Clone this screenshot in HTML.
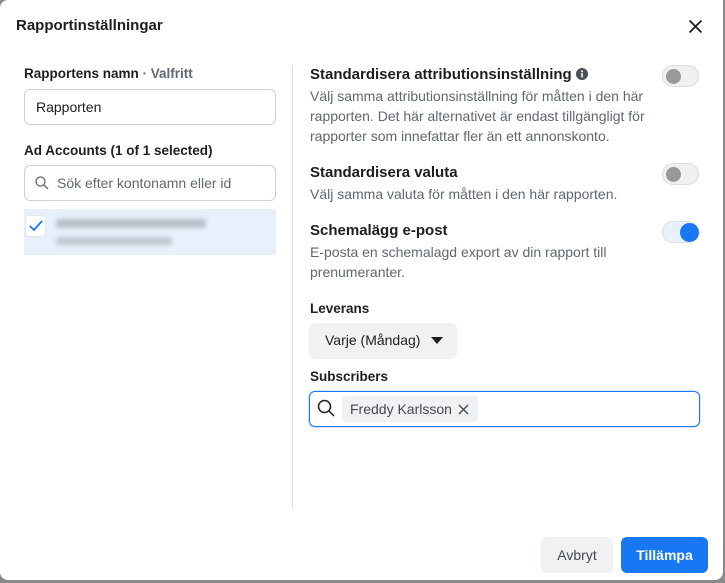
<!DOCTYPE html><html><head><meta charset="utf-8"><style>
body{margin:0;width:725px;height:583px;background:#8a8a8a;font-family:"Liberation Sans",sans-serif;color:#1c1e21;overflow:hidden;position:relative}
.d{position:absolute;left:0;top:0;width:723px;height:580px;background:#fff;border-radius:8px 0 8px 8px}
.a{position:absolute}
.lbl{font-size:13.5px;font-weight:bold;color:#1c1e21}
.in{border:1px solid #ccd0d5;border-radius:6px;background:#fff;box-sizing:border-box}
.t{font-size:14px;color:#606770;line-height:20px}
.h{font-size:15px;font-weight:bold;color:#1c1e21}
.tg{width:37px;height:22px;border-radius:11px;background:#f0f0f0;border:1px solid #dadde1;box-sizing:border-box}
.tg i{position:absolute;left:3px;top:3px;width:15px;height:15px;border-radius:50%;background:#999}
</style></head><body><div class="d">
<div class="a" style="left:16px;top:17px;font-size:15px;font-weight:bold;color:#1c1e21">Rapportinställningar</div>
<svg class="a" style="left:688px;top:19px" width="15" height="15"><path d="M1.5 1.5L13.5 13.5M13.5 1.5L1.5 13.5" stroke="#1c1e21" stroke-width="1.8"/></svg>
<div class="a lbl" style="left:24px;top:66px">Rapportens namn <span style="color:#606770">· Valfritt</span></div>
<div class="a in" style="left:24px;top:89px;width:252px;height:36px;font-size:14px;padding:9px 11px;color:#1c1e21">Rapporten</div>
<div class="a lbl" style="left:24px;top:143px">Ad Accounts (1 of 1 selected)</div>
<div class="a in" style="left:24px;top:165px;width:252px;height:36px;font-size:14px;padding:9px 0 0 32px;color:#606770">Sök efter kontonamn eller id</div>
<svg class="a" style="left:35px;top:176px" width="14" height="14"><circle cx="5.5" cy="5.5" r="4.5" fill="none" stroke="#606770" stroke-width="1.3"/><path d="M9 9L13 13" stroke="#606770" stroke-width="1.3"/></svg>
<div class="a" style="left:24px;top:209px;width:252px;height:46px;background:#e7f0fb"></div>
<div class="a" style="left:25px;top:215px;width:21px;height:22px;background:#fff;border-radius:4px;border:1px solid #e4e6eb;box-sizing:border-box"></div>
<svg class="a" style="left:28px;top:219px" width="16" height="14"><path d="M2 7L6 11L14 2" fill="none" stroke="#1877f2" stroke-width="1.8"/></svg>
<div class="a" style="left:56px;top:219px;width:150px;height:9px;background:#b9c0ca;filter:blur(2px);border-radius:3px"></div>
<div class="a" style="left:56px;top:237px;width:116px;height:8px;background:#c2c8d1;filter:blur(2px);border-radius:3px"></div>
<div class="a" style="left:292px;top:65px;width:1px;height:444px;background:#dadde1"></div>
<div class="a h" style="left:310px;top:66px">Standardisera attributionsinställning <svg width="12" height="12" style="vertical-align:-1px"><circle cx="6" cy="6" r="6" fill="#4b4f56"/><rect x="5.2" y="5" width="1.6" height="4.5" fill="#fff"/><circle cx="6" cy="3.2" r="1" fill="#fff"/></svg></div>
<div class="a t" style="left:310px;top:86px;width:380px">Välj samma attributionsinställning för måtten i den här rapporten. Det här alternativet är endast tillgängligt för rapporter som innefattar fler än ett annonskonto.</div>
<div class="a tg" style="left:662px;top:65px"><i></i></div>
<div class="a h" style="left:310px;top:164px">Standardisera valuta</div>
<div class="a t" style="left:310px;top:184px">Välj samma valuta för måtten i den här rapporten.</div>
<div class="a tg" style="left:662px;top:163px"><i></i></div>
<div class="a h" style="left:310px;top:222px">Schemalägg e-post</div>
<div class="a t" style="left:310px;top:242px;width:340px">E-posta en schemalagd export av din rapport till prenumeranter.</div>
<div class="a tg" style="left:662px;top:221px;background:#e7f0fb"><i style="left:17px;top:1px;width:19px;height:19px;background:#1877f2"></i></div>
<div class="a lbl" style="left:310px;top:301px">Leverans</div>
<div class="a" style="left:309px;top:323px;width:148px;height:36px;background:#f0f1f2;border-radius:6px"></div>
<div class="a" style="left:325px;top:332px;font-size:14px;color:#1c1e21">Varje (Måndag)</div>
<svg class="a" style="left:431px;top:337px" width="12" height="8"><path d="M0 0H12L6 7Z" fill="#1c1e21"/></svg>
<div class="a lbl" style="left:310px;top:369px">Subscribers</div>
<div class="a" style="left:309px;top:391px;width:391px;height:36px;border:1px solid #1877f2;border-radius:6px;box-sizing:border-box;box-shadow:0 0 0 1px #d8e6fb"></div>
<svg class="a" style="left:317px;top:399px" width="18" height="18"><circle cx="7.5" cy="7.5" r="6" fill="none" stroke="#1c1e21" stroke-width="1.5"/><path d="M12 12L17 17" stroke="#1c1e21" stroke-width="1.5"/></svg>
<div class="a" style="left:342px;top:396px;width:136px;height:26px;background:#f0f1f2;border-radius:4px"></div>
<div class="a" style="left:350px;top:401px;font-size:14px;color:#444950">Freddy Karlsson</div>
<svg class="a" style="left:458px;top:404px" width="11" height="11"><path d="M1 1L10 10M10 1L1 10" stroke="#444950" stroke-width="1.4"/></svg>
<div class="a" style="left:541px;top:537px;width:72px;height:36px;background:#f0f1f2;border-radius:6px;font-size:14px;color:#444950;text-align:center;line-height:36px">Avbryt</div>
<div class="a" style="left:621px;top:537px;width:87px;height:36px;background:#1877f2;border-radius:6px;font-size:14px;font-weight:bold;color:#fff;text-align:center;line-height:36px">Tillämpa</div>
</div></body></html>
